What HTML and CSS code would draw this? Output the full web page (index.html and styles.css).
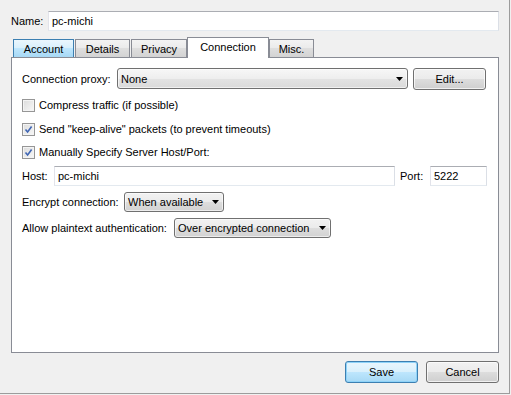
FILE: index.html
```html
<!DOCTYPE html>
<html lang="en">
<head>
    <meta charset="UTF-8">
    <title>Account Properties</title>
    <link rel="stylesheet" href="styles.css">
</head>
<body>
    <div class="dialog">
        <div class="name-row">
            <span class="name-label">Name:</span>
            <div class="textbox name-box">pc-michi</div>
        </div>

        <div class="tabs">
            <div class="tab tab-hover tab-account">Account</div>
            <div class="tab tab-details">Details</div>
            <div class="tab tab-privacy">Privacy</div>
            <div class="tab tab-active tab-connection">Connection</div>
            <div class="tab tab-misc">Misc.</div>
        </div>

        <div class="panel">
            <div class="row proxy-row">
                <span class="proxy-label">Connection proxy:</span>
                <div class="combo proxy-combo">
                    <span>None</span>
                    <svg width="7" height="4" viewBox="0 0 7 4"><path d="M0 0h7L3.5 4z" fill="#000"/></svg>
                </div>
                <button class="btn edit-btn">Edit...</button>
            </div>

            <div class="row check-row check-first">
                <span class="check"></span>
                <span>Compress traffic (if possible)</span>
            </div>
            <div class="row check-row">
                <span class="check">
                    <svg width="9" height="9" viewBox="0 0 9 9"><polyline points="1.5,4.5 3.6,7 7.6,1.6" fill="none" stroke="#4066b4" stroke-width="1.6"/></svg>
                </span>
                <span>Send "keep-alive" packets (to prevent timeouts)</span>
            </div>
            <div class="row check-row check-last">
                <span class="check">
                    <svg width="9" height="9" viewBox="0 0 9 9"><polyline points="1.5,4.5 3.6,7 7.6,1.6" fill="none" stroke="#4066b4" stroke-width="1.6"/></svg>
                </span>
                <span>Manually Specify Server Host/Port:</span>
            </div>

            <div class="row field-row">
                <span class="host-label">Host:</span>
                <div class="textbox host-box">pc-michi</div>
                <span class="port-label">Port:</span>
                <div class="textbox port-box">5222</div>
            </div>

            <div class="row field-row">
                <span class="encrypt-label">Encrypt connection:</span>
                <div class="combo encrypt-combo">
                    <span>When available</span>
                    <svg width="7" height="4" viewBox="0 0 7 4"><path d="M0 0h7L3.5 4z" fill="#000"/></svg>
                </div>
            </div>

            <div class="row field-row">
                <span class="auth-label">Allow plaintext authentication:</span>
                <div class="combo auth-combo">
                    <span>Over encrypted connection</span>
                    <svg width="7" height="4" viewBox="0 0 7 4"><path d="M0 0h7L3.5 4z" fill="#000"/></svg>
                </div>
            </div>
        </div>

        <div class="buttons">
            <button class="btn btn-default">Save</button>
            <button class="btn">Cancel</button>
        </div>
    </div>
</body>
</html>
```

FILE: styles.css
```css
body {
    margin: 0;
    background-color: #f0f0f0;
    font-family: "Liberation Sans", Arial, sans-serif;
    font-size: 11px;
    color: #000;
}

.dialog {
    box-sizing: border-box;
    width: 510px;
    height: 394px;
    padding: 11px 10px 0 11px;
    border-right: 1px solid #9c9c9c;
    border-bottom: 1px solid #9c9c9c;
}

.name-row {
    display: flex;
    align-items: center;
}

.name-label {
    width: 37px;
}

.textbox {
    box-sizing: border-box;
    height: 20px;
    display: flex;
    align-items: center;
    padding: 0 3px;
    background-color: #fff;
    border: 1px solid;
    border-color: #abadb3 #dbdfe6 #e3e9ef #e2e3ea;
}

.name-box {
    flex: 1;
}

/* tabs */
.tabs {
    display: flex;
    align-items: flex-end;
    height: 20px;
    margin-top: 6px;
    padding-left: 2px;
}

.tab {
    box-sizing: border-box;
    height: 18px;
    padding-top: 1px;
    margin-left: 1px;
    text-align: center;
    line-height: 16px;
    border: 1px solid #898c95;
    border-bottom: none;
    background: linear-gradient(#f3f3f3, #ebebeb 45%, #dedede 50%, #d3d3d3);
}

.tab-hover {
    border-color: #3c7fb1;
    background: linear-gradient(#eaf6fd, #d9f0fc 45%, #bee6fd 50%, #a7d9f5);
}

.tab-active {
    position: relative;
    z-index: 1;
    height: 21px;
    padding-top: 0;
    line-height: 18px;
    margin-bottom: -1px;
    background: #fff;
}

.tab-account { width: 61px; margin-left: 0; }
.tab-details { width: 55px; }
.tab-privacy { width: 56px; }
.tab-connection { width: 82px; margin-left: 0; }
.tab-misc { width: 45px; margin-left: 0; }

.panel {
    box-sizing: border-box;
    height: 296px;
    padding: 10px 0 0 10px;
    background-color: #fff;
    border: 1px solid #898c95;
}

.row {
    display: flex;
    align-items: center;
}

.proxy-row {
    height: 21px;
}

.proxy-label { width: 95px; }

.combo {
    box-sizing: border-box;
    height: 20px;
    display: flex;
    align-items: center;
    justify-content: space-between;
    padding: 0 4px 0 3px;
    border: 1px solid #707070;
    border-radius: 3px;
    background: linear-gradient(#f2f2f2, #ebebeb 50%, #dddddd 51%, #d2d2d2);
    box-shadow: inset 0 0 0 1px rgba(255, 255, 255, 0.6);
}

.proxy-combo {
    width: 291px;
    height: 21px;
    background: linear-gradient(#f7f7f7, #eeeeee 50%, #e3e3e3 51%, #dadada);
}

.edit-btn {
    width: 73px;
    height: 20px;
    margin-left: 5px;
}

.check-row {
    height: 16px;
    margin-top: 8px;
}

.check-last {
    margin-top: 7px;
}

.check {
    box-sizing: border-box;
    width: 13px;
    height: 13px;
    margin-right: 4px;
    display: flex;
    align-items: center;
    justify-content: center;
    border: 1px solid #969696;
    background: linear-gradient(135deg, #dcdcdc, #f8f8f8);
    box-shadow: inset 0 0 0 1px #f4f4f4;
}

.field-row {
    height: 20px;
    margin-top: 6px;
}

.host-label { width: 32px; }
.host-box { width: 341px; }
.port-label { width: 30px; margin-left: 5px; }
.port-box { width: 57px; }

.encrypt-label { width: 102px; }
.encrypt-combo { width: 100px; }

.auth-label { width: 152px; }
.auth-combo { width: 157px; }

/* bottom buttons */
.buttons {
    display: flex;
    justify-content: flex-end;
    gap: 8px;
    margin-top: 8px;
}

.btn {
    box-sizing: border-box;
    width: 73px;
    height: 22px;
    padding: 0;
    font: inherit;
    color: #000;
    border: 1px solid #707070;
    border-radius: 3px;
    background: linear-gradient(#f2f2f2, #ebebeb 50%, #dddddd 51%, #cfcfcf);
    box-shadow: inset 0 0 0 1px rgba(255, 255, 255, 0.7);
}

.btn-default {
    border-color: #3c7fb1;
    background: linear-gradient(#eaf6fd, #d9f0fc 50%, #bee6fd 51%, #a7d9f5);
    box-shadow: inset 0 0 0 1px #8fd3f8;
}
```
